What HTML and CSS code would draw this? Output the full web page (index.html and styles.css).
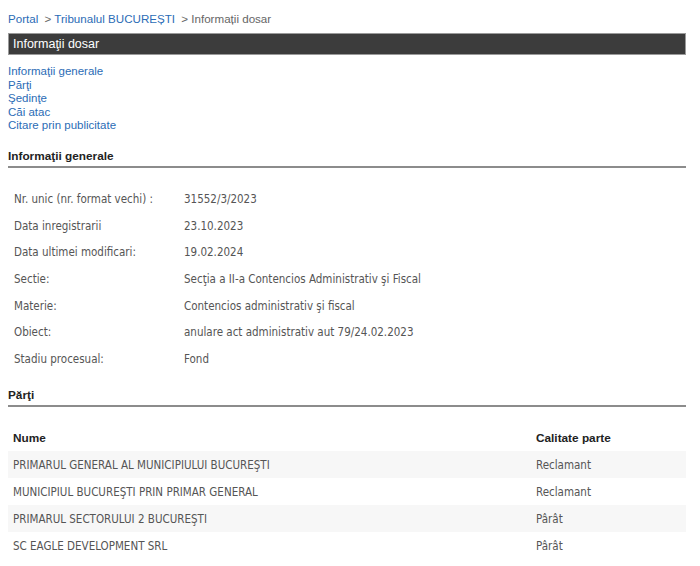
FILE: index.html
```html
<!DOCTYPE html>
<html lang="ro">
<head>
    <meta charset="UTF-8">
    <title>Informaţii dosar</title>
    <link rel="stylesheet" href="styles.css">
</head>
<body>

<div class="breadcrumb">
    <a href="#">Portal</a>
    <span class="sep">&gt;</span> <a href="#">Tribunalul BUCUREȘTI</a>
    <span class="sep">&gt;</span> <span class="current">Informații dosar</span>
</div>

<div class="title-bar">Informaţii dosar</div>

<div class="anchors">
    <a href="#generale">Informaţii generale</a>
    <a href="#parti">Părţi</a>
    <a href="#sedinte">Şedinţe</a>
    <a href="#cai">Căi atac</a>
    <a href="#citare">Citare prin publicitate</a>
</div>

<h3 id="generale" class="section-title">Informaţii generale</h3>
<table class="info">
    <tr><td class="label">Nr. unic (nr. format vechi) :</td><td>31552/3/2023</td></tr>
    <tr><td class="label">Data inregistrarii</td><td>23.10.2023</td></tr>
    <tr><td class="label">Data ultimei modificari:</td><td>19.02.2024</td></tr>
    <tr><td class="label">Sectie:</td><td>Secţia a II-a Contencios Administrativ şi Fiscal</td></tr>
    <tr><td class="label">Materie:</td><td>Contencios administrativ şi fiscal</td></tr>
    <tr><td class="label">Obiect:</td><td>anulare act administrativ aut 79/24.02.2023</td></tr>
    <tr><td class="label">Stadiu procesual:</td><td>Fond</td></tr>
</table>

<h3 id="parti" class="section-title">Părţi</h3>
<table class="parti">
    <thead>
        <tr><th class="col-nume">Nume</th><th>Calitate parte</th></tr>
    </thead>
    <tbody>
        <tr><td>PRIMARUL GENERAL AL MUNICIPIULUI BUCUREŞTI</td><td>Reclamant</td></tr>
        <tr><td>MUNICIPIUL BUCUREŞTI PRIN PRIMAR GENERAL</td><td>Reclamant</td></tr>
        <tr><td>PRIMARUL SECTORULUI 2 BUCUREŞTI</td><td>Pârât</td></tr>
        <tr><td>SC EAGLE DEVELOPMENT SRL</td><td>Pârât</td></tr>
    </tbody>
</table>

</body>
</html>
```

FILE: styles.css
```css
body {
    margin: 8px;
    width: 678px;
    font-family: "Liberation Sans", Arial, sans-serif;
    font-size: 11.5px;
    color: #333;
    background: #fff;
}
a {
    color: #2b6cb6;
    text-decoration: none;
}
.breadcrumb {
    padding-top: 4px;
    line-height: 13px;
    font-size: 11.6px;
    color: #666;
}
.breadcrumb .sep {
    margin-left: 3px;
}
.breadcrumb .current {
    color: #666;
}
.title-bar {
    margin-top: 8px;
    height: 20px;
    line-height: 20px;
    padding-left: 4px;
    background-color: #3c3c3c;
    border: 1px solid #9a9a9a;
    color: #fff;
    font-size: 12.5px;
}
.anchors {
    margin-top: 10px;
    line-height: 13.5px;
}
.anchors a {
    display: block;
}
.section-title {
    margin: 16px 0 0;
    padding-bottom: 3px;
    font-size: 11.8px;
    line-height: 14px;
    font-weight: bold;
    color: #222;
    border-bottom: 2px solid #8c8c8c;
}
.info, .parti {
    border-collapse: collapse;
    font-family: "DejaVu Sans Condensed", "DejaVu Sans", sans-serif;
    font-size: 11.5px;
    color: #555;
}
.info {
    margin-top: 18px;
    margin-bottom: 16px;
}
.info td {
    height: 26.7px;
    padding: 0;
    vertical-align: middle;
}
.info td.label {
    width: 170px;
    padding-left: 6px;
}
.parti {
    width: 100%;
    margin-top: 17px;
}
.parti th {
    height: 27px;
    padding: 0 0 0 5px;
    text-align: left;
    font-family: "Liberation Sans", Arial, sans-serif;
    font-size: 11.8px;
    font-weight: bold;
    color: #222;
}
.parti th.col-nume {
    width: 518px;
}
.parti td {
    height: 27px;
    padding: 0 0 0 5px;
}
.parti tbody tr:nth-child(odd) {
    background-color: #f7f7f7;
}
```
